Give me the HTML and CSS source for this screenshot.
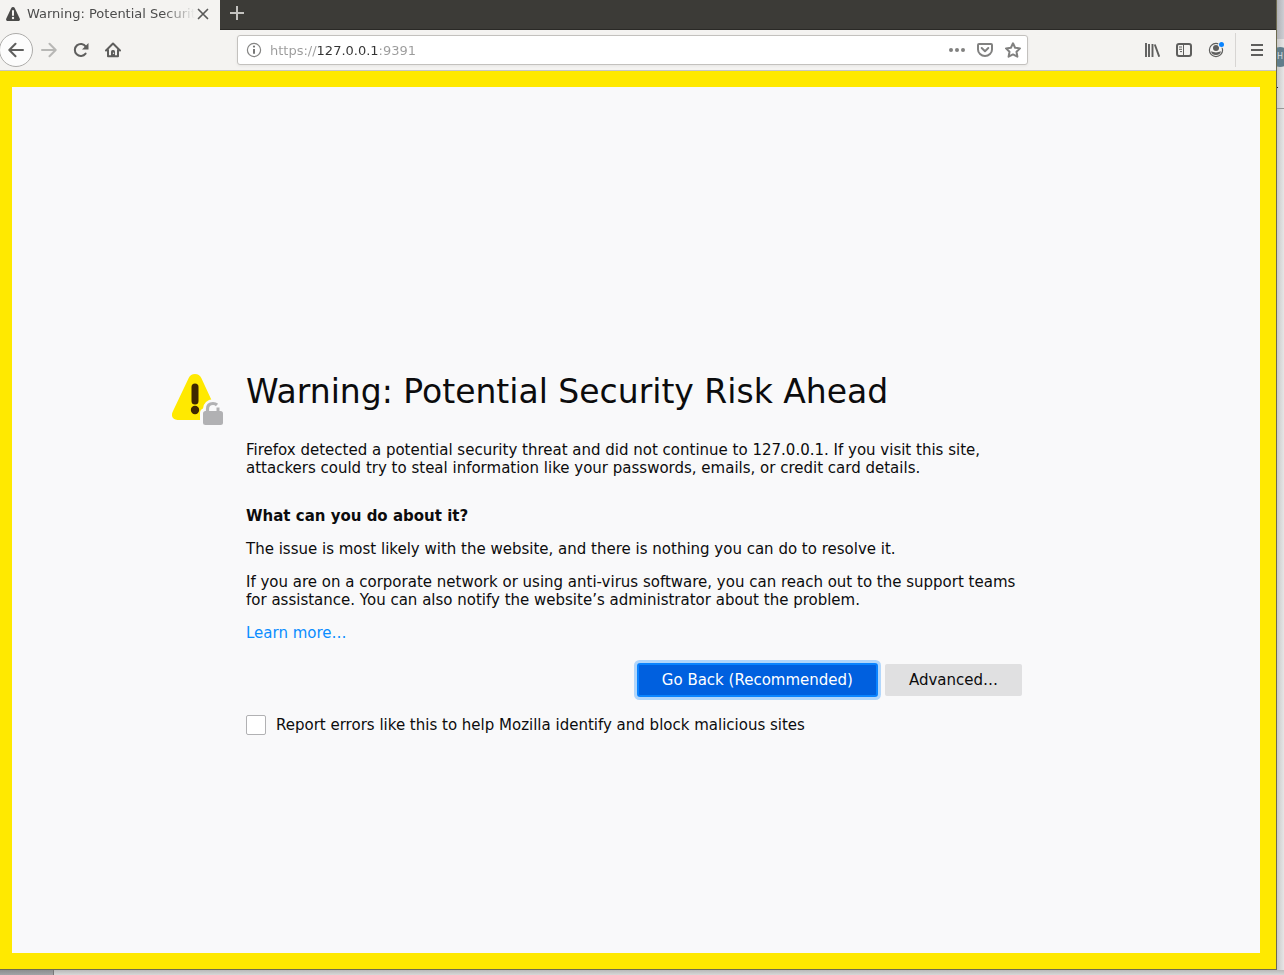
FILE: index.html
```html
<!doctype html>
<html lang="en">
<head>
<meta charset="utf-8">
<title>Warning: Potential Security Risk Ahead</title>
<link rel="stylesheet" href="styles.css">
</head>

<body>
<div class="window">
	<header class="tabs">
		<div class="tab">
			<svg class="tab-icon" width="14" height="14" viewBox="0 0 14 14"><path d="M7 0C6.200 0 5.600.4 5.300 1L.3 11.500C-.3 12.800.4 14 1.700 14H12.300C13.600 14 14.300 12.800 13.700 11.500L8.700 1C8.400.4 7.800 0 7 0Z" fill="#4a4a49"/><path d="M7 4V8" stroke="#f4f3f1" stroke-width="2" stroke-linecap="round"/><circle cx="7" cy="11" r="1.200" fill="#f4f3f1"/></svg>
			<span class="tab-title">Warning: Potential Security Risk Ahead</span>
			<button class="tab-close" aria-label="Close tab"><svg width="12" height="12" viewBox="0 0 12 12"><path d="M1.500 1.500L10.500 10.500M10.500 1.500L1.500 10.500" stroke="#5a5a59" stroke-width="1.700" stroke-linecap="round"/></svg></button>
		</div>
		<button class="tab-new" aria-label="New tab"><svg width="14" height="14" viewBox="0 0 14 14"><path d="M7 0V14M0 7H14" stroke="#c4c3c0" stroke-width="2"/></svg></button>
	</header>

	<nav class="toolbar">
		<button class="tool back" aria-label="Back"><svg width="16" height="16" viewBox="0 0 16 16"><path d="M15 8H1.500M7.500 1.800L1.300 8L7.500 14.200" class="line"/></svg></button>
		<button class="tool" disabled aria-label="Forward"><svg width="16" height="16" viewBox="0 0 16 16"><path d="M1 8H14.500M8.500 1.800L14.700 8L8.500 14.200" class="line"/></svg></button>
		<button class="tool" aria-label="Reload"><svg width="16" height="16" viewBox="0 0 16 16"><path d="M12.600 11.600A6 6 0 1 1 12.800 4.600" class="line"/><path d="M15.500 1V7.500H9Z" fill="#5e5e5d"/></svg></button>
		<button class="tool" aria-label="Home"><svg width="16" height="16" viewBox="0 0 16 16"><path d="M1 8.500L8 1.500L15 8.500M3 8V14.200H13V8" class="line"/><path d="M6 14V9.500Q6 8 7.500 8H8.500Q10 8 10 9.500V14Z" fill="#5e5e5d"/><circle cx="8.500" cy="11.300" r=".7" fill="#f4f3f1"/></svg></button>
		<div class="urlbar">
			<svg width="16" height="16" viewBox="0 0 16 16"><circle cx="8" cy="8" r="6.600" class="thin"/><path d="M8 7V11.800" stroke="#777776" stroke-width="2"/><circle cx="8" cy="4.600" r="1.100" fill="#777776"/></svg>
			<input class="url" type="text" value="https://127.0.0.1:9391" aria-label="Address">
			<button class="action" aria-label="Page actions"><svg width="16" height="16" viewBox="0 0 16 16"><g fill="#818180"><circle cx="2" cy="8" r="2"/><circle cx="8" cy="8" r="2"/><circle cx="14" cy="8" r="2"/></g></svg></button>
			<button class="action" aria-label="Save to Pocket"><svg width="16" height="16" viewBox="0 0 16 16"><path d="M2 2H14Q15 2 15 3V7.500A7 6.500 0 0 1 1 7.500V3Q1 2 2 2Z" class="grey"/><path d="M4.700 6L8 9.200L11.300 6" class="grey"/></svg></button>
			<button class="action" aria-label="Bookmark this page"><svg width="16" height="16" viewBox="0 0 16 16"><path d="M8 1.300L10.100 5.700L15 6.400L11.500 9.800L12.400 14.700L8 12.400L3.600 14.700L4.500 9.800L1 6.400L5.900 5.700Z" class="grey"/></svg></button>
		</div>
		<button class="tool" aria-label="Library"><svg width="16" height="16" viewBox="0 0 16 16"><path d="M2 1V15M5 2V15M8.500 2V15M10.800 2.500L15.200 14.700" stroke="#5e5e5d" stroke-width="1.900"/></svg></button>
		<button class="tool" aria-label="Sidebars"><svg width="16" height="16" viewBox="0 0 16 16"><rect x="1" y="2" width="14" height="12" rx="2" class="line"/><path d="M7.500 2V14M3 5H6M3 7.300H6M4 9.600H6" stroke="#5e5e5d"/></svg></button>
		<button class="tool account" aria-label="Account"><svg width="16" height="16" viewBox="0 0 16 16"><circle cx="8" cy="8" r="6.600" fill="none" stroke="#5e5e5d" stroke-width="1.200"/><circle cx="8" cy="6" r="3" fill="#5e5e5d"/><path d="M3 9.300Q8 11.500 13 9.300Q12.500 12.800 8 13Q3.500 12.800 3 9.300Z" fill="#5e5e5d"/><circle cx="13.500" cy="2.500" r="3.300" fill="#f4f3f1"/><circle cx="13.500" cy="2.500" r="2.500" fill="#0a84ff"/></svg></button>
		<div class="separator"></div>
		<button class="tool" aria-label="Menu"><svg width="16" height="16" viewBox="0 0 16 16"><path d="M2 3H14M2 8H14M2 13H14" stroke="#5e5e5d" stroke-width="2"/></svg></button>
	</nav>

	<main class="page">
		<div class="warning">
			<svg class="warning-icon" width="52" height="52" viewBox="0 0 52 52">
				<path d="M23 0C20 0 18 1.300 16.700 4L.8 37.500C-1.500 42 .7 46 5.500 46H40.500C45.300 46 46.500 42 44.800 37.500L29.300 4C28 1.300 26 0 23 0Z" fill="#ffe900"/>
				<path d="M23 13V27" stroke="#3e2800" stroke-width="7" stroke-linecap="round"/>
				<circle cx="23" cy="36" r="4.200" fill="#3e2800"/>
				<path d="M28 52V39Q28 35.500 31 34.500Q32 26 41 25H52V52Z" fill="#f9f9fa"/>
				<rect x="31" y="37" width="20" height="14" rx="2.500" fill="#b1b1b3"/>
				<path d="M35.500 38V35Q35.500 29.500 41 29.500Q43.500 29.500 45 31" fill="none" stroke="#b1b1b3" stroke-width="3.200"/>
				<path d="M46 38V33.500" stroke="#b1b1b3" stroke-width="3"/>
			</svg>
			<div class="content">
				<h1>Warning: Potential Security Risk Ahead</h1>
				<p>Firefox detected a potential security threat and did not continue to 127.0.0.1. If you visit this site, attackers could try to steal information like your passwords, emails, or credit card details.</p>
				<h2>What can you do about it?</h2>
				<p>The issue is most likely with the website, and there is nothing you can do to resolve it.</p>
				<p>If you are on a corporate network or using anti-virus software, you can reach out to the support teams for assistance. You can also notify the website’s administrator about the problem.</p>
				<p><a href="#">Learn more…</a></p>
				<div class="buttons">
					<button class="btn primary">Go Back (Recommended)</button>
					<button class="btn">Advanced…</button>
				</div>
				<div class="report">
					<input type="checkbox" id="report">
					<label for="report">Report errors like this to help Mozilla identify and block malicious sites</label>
				</div>
			</div>
		</div>
	</main>
</div>

<!-- windows behind the browser -->
<aside class="side">
	<div class="side-top"></div>
	<div class="side-bar"><span class="avatar">H</span><i class="tick"></i></div>
</aside>
<div class="under"><div class="under-left"></div></div>
</body>
</html>
```
FILE: styles.css
```css
* { box-sizing:border-box;}
body { margin:0; min-height:100vh; display:grid; grid-template-columns:1fr 7px; grid-template-rows:1fr 5px; background:#d8d8d8; font-family:"DejaVu Sans", Verdana, sans-serif;}
button { margin:0; padding:0; border:none; background:none; font:inherit; color:inherit;}
svg { display:block; flex:none;}

.window { display:flex; flex-direction:column; min-width:0; border-right:1px solid #6e6b50; border-bottom:1px solid #6e6b50; overflow:hidden;}

/* tabs */
.tabs { display:flex; height:30px; background:#3c3b37; box-shadow:inset 0 -1px #2a2926;}
.tab { display:flex; align-items:center; width:220px; padding:0 9px 2px 6px; background:#f4f3f1; color:#4c4c4c; font-size:13px;}
.tab-title { flex:1; min-width:0; margin-left:7px; line-height:20px; overflow:hidden; white-space:nowrap; -webkit-mask-image:linear-gradient(to left, transparent, #000 32px); mask-image:linear-gradient(to left, transparent, #000 32px);}
.tab-close { display:flex; align-items:center; justify-content:center; width:16px; height:16px;}
.tab-new { display:flex; align-items:center; justify-content:center; width:34px; height:26px;}

/* toolbar */
.toolbar { display:flex; align-items:center; height:41px; padding-right:3px; background:#f4f3f1; border-bottom:1px solid #c8c6c3;}
.tool { display:flex; align-items:center; justify-content:center; flex:none; width:32px; height:32px;}
.tool:disabled { opacity:.4;}
.back { width:34px; height:34px; margin-left:-1px; border:1px solid #adacaa; border-radius:50%; background:#fcfcfc;}
.line { fill:none; stroke:#5e5e5d; stroke-width:2; stroke-linecap:round; stroke-linejoin:round;}
.thin { fill:none; stroke:#858584; stroke-width:1.2px;}
.grey { fill:none; stroke:#818180; stroke-width:2; stroke-linecap:round; stroke-linejoin:round;}
.urlbar { display:flex; align-items:center; flex:1; min-width:0; height:30px; margin:0 108px; padding:0 6px 0 8px; border:1px solid #c3c1be; border-radius:3px; background:#fff; box-shadow:0 1px 3px rgba(0,0,0,.06);}
/* the host stands out from the scheme and the port */
.url { flex:1; min-width:0; height:20px; margin:0 8px; padding:0; border:none; outline:none; font:13px "DejaVu Sans", Verdana, sans-serif; color:transparent; background:linear-gradient(to right, #9b9b9b 47px, #333 47px, #333 109px, #9b9b9b 109px); -webkit-background-clip:text; background-clip:text; caret-color:#333;}
.action { width:16px; height:16px; margin-left:12px;}
.separator { width:1px; height:34px; margin:0 5px 0 3px; background:#d7d5d3;}

/* page */
.page { flex:1; display:flex; align-items:center; padding:66px 0 0; border:solid #ffe900; border-width:16px 16px 16px 12px; background:#f9f9fa; color:#0c0c0d; font-size:15px; line-height:18px;}
.warning { flex:1; display:grid; grid-template-columns:minmax(75px,1fr) minmax(0,780px) minmax(0,1fr);}
.warning-icon { justify-self:end; margin:3px 22px 0 0;}
h1 { margin:0 0 28px; font-size:33px; line-height:42px; font-weight:normal;}
h2 { margin:30px 0 15px; font-size:15px; line-height:18px;}
p { margin:0 0 15px;}
a { color:#0a8dff; text-decoration:none;}
.buttons { display:flex; justify-content:flex-end; gap:8px; margin:22px 4px 19px 0;}
.btn { height:32px; padding:0 24px; border-radius:2px; background:#e0e0e1;}
.primary { background:#0060df; color:#fff; box-shadow:inset 0 0 0 1px #0a84ff, 0 0 0 1px #0a84ff, 0 0 0 4px rgba(10,132,255,.3);}
.report { display:flex; align-items:center; gap:10px;}
.report input { appearance:none; width:20px; height:20px; margin:0; border:1px solid #b1b1b3; border-radius:2px; background:#fff;}

/* behind */
.side { overflow:hidden; background:linear-gradient(to right, #c9c9c9, #e6e6e6);}
.side-top { height:39px; background:linear-gradient(to right, #b0b1b6, #cdced3);}
.side-bar { height:70px; padding-top:8px; border-bottom:1px solid #989898;}
.avatar { display:block; width:20px; height:20px; margin-left:-7px; border-radius:50%; background:#607d8b; color:#d3dade; font-size:8px; line-height:20px; text-align:center;}
.tick { display:block; width:1px; height:1px; margin-top:20px; background:#222;}
.under { grid-column:1 / 3; background:linear-gradient(#b8b8b8, #d8d8d8);}
.under-left { width:54px; height:5px; border-right:1px solid #777; background:linear-gradient(#8b8d8f, #a2a4a7);}
```
